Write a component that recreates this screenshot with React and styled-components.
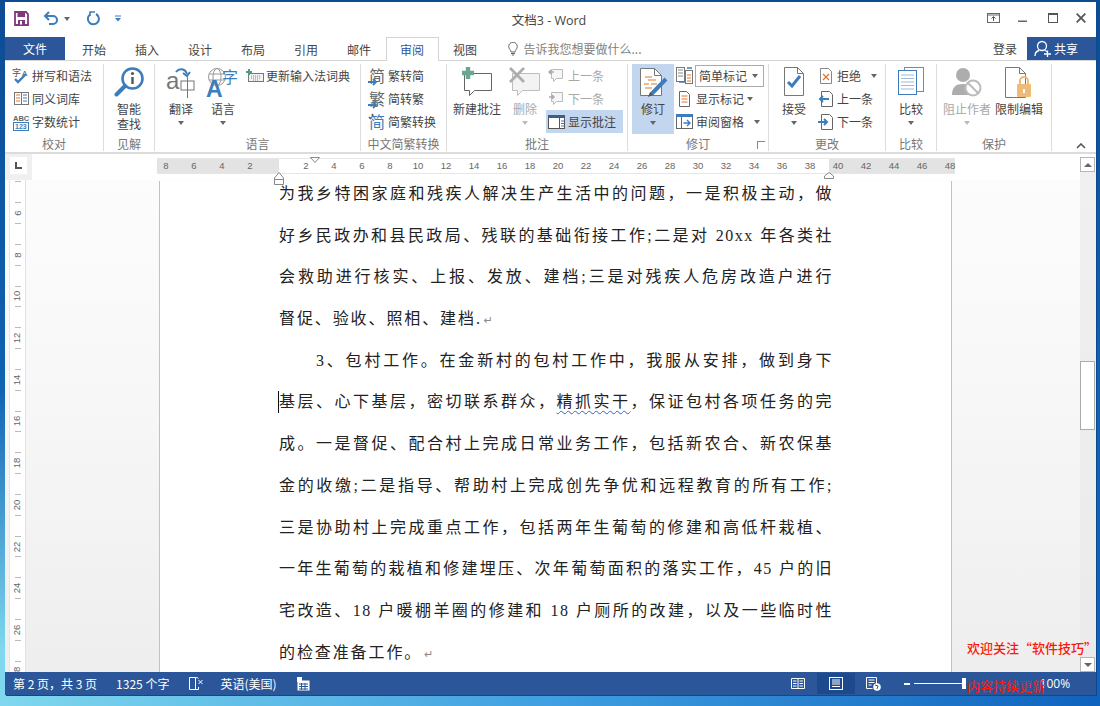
import React from "react";
import styled, { createGlobalStyle } from "styled-components";

const sans = `"Noto Sans CJK SC", sans-serif`;
const BLUE = "#2b579a";
const ICON = "#3f7cbb";
const ORANGE = "#e2762c";

const Global = createGlobalStyle`
    html, body {
        margin: 0;
        height: 706px;
        overflow: hidden;
        background:
            linear-gradient(180deg, #0c4c93 0%, #0f62b4 55%, rgba(20, 120, 210, 0) 92%),
            linear-gradient(90deg, #7fd8ee 0%, #3f9fe0 50%, #0f62bd 100%);
    }
`;

const Ico = styled.svg`
    display: block;
    flex: none;
`;

const Window = styled.div`
    width: 1091px;
    height: 693px;
    margin: 2px 0 0 5px;
    background: #fff;
    display: flex;
    flex-direction: column;
    position: relative;
    font-family: ${sans};
    font-size: 12px;
    color: #444;
    box-shadow: 1px 1px 0 #0d4a8c;
`;

const TitleBar = styled.div`
    height: 35px;
    flex: none;
    display: grid;
    grid-template-columns: 1fr auto 1fr;
    align-items: center;
`;

const Quick = styled.div`
    display: flex;
    align-items: center;
    padding: 0 0 3px 9px;
`;

const Title = styled.div`
    font-family: "Open Sans", ${sans};
    font-size: 12.5px;
    color: #444;
    margin: 0 0 1px -3px;
`;

const Controls = styled.div`
    display: flex;
    justify-content: flex-end;
    align-items: center;
    gap: 18px;
    padding: 0 10px 3px 0;
`;

const TabRow = styled.div`
    height: 23px;
    flex: none;
    display: flex;
    border-bottom: 1px solid #d4d4d4;
`;

const FileTab = styled.div`
    width: 60px;
    margin-right: 2.5px;
    background: ${BLUE};
    color: #fff;
    display: flex;
    align-items: center;
    justify-content: center;
`;

const Tab = styled.div`
    width: 53px;
    box-sizing: border-box;
    height: ${p => (p.$active ? "24px" : "23px")};
    display: flex;
    align-items: center;
    justify-content: center;
    background: #fff;
    color: ${p => (p.$active ? BLUE : "#444")};
    border: 1px solid ${p => (p.$active ? "#d4d4d4" : "transparent")};
    border-bottom: 0;
`;

const TellMe = styled.div`
    display: flex;
    align-items: center;
    gap: 6px;
    margin-left: 16px;
    color: #82827a;
`;

const Login = styled.div`
    margin-left: auto;
    align-self: center;
    margin-right: 10px;
`;

const Share = styled.div`
    width: 69px;
    height: 23px;
    background: ${BLUE};
    color: #fff;
    display: flex;
    align-items: center;
    padding-left: 7px;
    box-sizing: border-box;
    gap: 2px;
`;

const Ribbon = styled.div`
    height: 93px;
    flex: none;
    box-sizing: border-box;
    padding-top: 3px;
    display: flex;
    border-bottom: 2px solid #dcdcdc;
    position: relative;
`;

const Group = styled.section`
    width: ${p => p.$w}px;
    height: 87px;
    box-sizing: border-box;
    flex: none;
    border-right: 1px solid #dedede;
    display: flex;
    flex-direction: column;
    position: relative;
`;

const GroupBody = styled.div`
    height: 70px;
    display: flex;
    padding-left: ${p => p.$pad || 0}px;
`;

const Caption = styled.div`
    margin-top: 2px;
    text-align: center;
    line-height: 15px;
    color: #777;
`;

const Launcher = styled.div`
    position: absolute;
    right: 3px;
    bottom: 2px;
    width: 7px;
    height: 7px;
    border: solid #888;
    border-width: 1px 0 0 1px;
`;

const Collapse = styled.div`
    position: absolute;
    right: 10px;
    bottom: 3px;
`;

const Stack = styled.div`
    display: flex;
    flex-direction: column;
`;

const Small = styled.div`
    height: 23px;
    display: flex;
    align-items: center;
    gap: 2px;
    padding-left: 2px;
    white-space: nowrap;
    width: ${p => (p.$w ? `${p.$w}px` : "auto")};
    box-sizing: border-box;
    background: ${p => (p.$on ? "#c3d6ef" : "transparent")};
    color: ${p => (p.$off ? "#a8a8a8" : "#444")};
`;

const Combo = styled.div`
    width: 69px;
    height: 22px;
    box-sizing: border-box;
    border: 1px solid #ababab;
    margin-left: -1px;
    padding: 0 5px 0 3px;
    display: flex;
    align-items: center;
    justify-content: space-between;
`;

const Large = styled.div`
    width: ${p => p.$w}px;
    height: 70px;
    flex: none;
    display: flex;
    flex-direction: column;
    align-items: center;
    text-align: center;
    line-height: 15px;
    background: ${p => (p.$on ? "#c3d6ef" : "transparent")};
    color: ${p => (p.$off ? "#a8a8a8" : "#444")};
`;

const LargeIcon = styled.div`
    height: 37px;
    padding-top: 3px;
    box-sizing: border-box;
`;

const Caret = styled.span`
    display: inline-block;
    flex: none;
    width: 0;
    height: 0;
    border: 3.5px solid transparent;
    border-top: 4px solid ${p => (p.$off ? "#bbb" : "#666")};
    border-bottom: 0;
    margin: ${p => p.$m || "5px 0 0"};
`;

const Work = styled.div`
    flex: 1;
    min-height: 0;
    display: flex;
`;

const Main = styled.div`
    flex: 1;
    min-width: 0;
    display: flex;
    flex-direction: column;
`;

const RulerRow = styled.div`
    height: 26px;
    flex: none;
    display: flex;
    position: relative;
`;

const Corner = styled.div`
    width: 27px;
    flex: none;
    background: #f0f0f0;
    display: flex;
    padding: 3px 0 0 5px;
    box-sizing: border-box;
`;

const CornerBox = styled.div`
    width: 17px;
    height: 17px;
    background: #fff;
    display: flex;
    align-items: center;
    justify-content: center;
`;

const HRuler = styled.div`
    margin: 5px 0 0 125px;
    width: 798px;
    height: 14px;
    background: linear-gradient(90deg, #e3e3e3 122px, #fff 122px, #fff 672px, #e3e3e3 672px);
    box-shadow: 0 -1px 0 #e6e6e6, 0 1px 0 #e6e6e6;
    display: flex;
    position: relative;
`;

const HLabels = styled.div`
    display: flex;
    margin-left: -5px;
`;

const HNum = styled.span`
    width: 28px;
    flex: none;
    text-align: center;
    font-family: "Liberation Sans", sans-serif;
    font-size: 9.5px;
    line-height: 14px;
    color: #666;
`;

const Marker = styled.div`
    position: absolute;
    left: ${p => p.$x}px;
    top: ${p => p.$y}px;
`;

const DocRow = styled.div`
    flex: 1;
    min-height: 0;
    display: flex;
    overflow: hidden;
    background: linear-gradient(180deg, #fcfcfc 0%, #f7f7f7 45%, #eeeeee 100%);
`;

const VRuler = styled.div`
    width: 15px;
    flex: none;
    margin-left: 5px;
    background: #fff;
    box-shadow: -1px 0 0 #e6e6e6, 1px 0 0 #e2e2e2;
    display: flex;
    flex-direction: column;
    align-items: center;
    padding-top: 0;
    overflow: hidden;
`;

const VCell = styled.div`
    height: 41.7px;
    flex: none;
    width: 100%;
    display: flex;
    flex-direction: column;
    align-items: center;
    justify-content: space-between;
    padding: 10px 0;
    box-sizing: border-box;
    &:first-child {
        margin-top: -29.5px;
    }
    &::before, &::after {
        content: "";
        width: 6px;
        height: 1px;
        background: #bbb;
    }
    span {
        transform: rotate(-90deg);
        font-family: "Liberation Sans", sans-serif;
        font-size: 9.5px;
        line-height: 10px;
        color: #666;
        white-space: nowrap;
    }
`;

const Page = styled.div`
    width: 793px;
    box-sizing: border-box;
    margin-left: 134px;
    flex: none;
    background: #fff;
    border: solid #c2c2c2;
    border-width: 0 1.5px;
    padding: 0 118px 0 119px;
    overflow: hidden;
    margin-top: 1px;
`;

const DocText = styled.div`
    margin-top: -8px;
    font-family: "Liberation Serif", "Noto Sans CJK SC", serif;
    font-size: 16px;
    letter-spacing: 1.5px;
    color: #222;
`;

const Line = styled.div`
    height: 41.7px;
    line-height: 41.7px;
    position: relative;
    text-align: justify;
    text-align-last: ${p => (p.$end ? "left" : "justify")};
    text-justify: inter-character;
    padding-left: ${p => (p.$indent ? 37 : 0)}px;
    letter-spacing: ${p => (p.$end ? "1.9px" : "inherit")};
`;

const Mark = styled.span`
    color: #888;
    font-size: 11px;
    font-family: "DejaVu Sans", sans-serif;
    margin-left: 2px;
`;

const Squiggle = styled.span`
    text-decoration: underline wavy #3a5fc8 1px;
    text-underline-offset: 3px;
`;

const Cursor = styled.i`
    position: absolute;
    left: -1px;
    top: 10px;
    width: 1px;
    height: 22px;
    background: #111;
`;

const Scroll = styled.div`
    width: 16px;
    flex: none;
    display: flex;
    flex-direction: column;
    padding-top: 3px;
    box-sizing: border-box;
    background: linear-gradient(180deg, #fff 18px, #f0f0f0 18px, #eaeaea 100%);
`;

const ScrollBtn = styled.div`
    width: 15px;
    height: 15px;
    box-sizing: border-box;
    flex: none;
    background: #fff;
    border: 1px solid #b5b5b5;
    display: flex;
    align-items: center;
    justify-content: center;
`;

const Thumb = styled.div`
    width: 15px;
    height: 69px;
    box-sizing: border-box;
    flex: none;
    background: #fff;
    border: 1px solid #ababab;
    margin: 189px 0 auto;
`;

const ArrowUp = styled.span`
    width: 0;
    height: 0;
    border: 4px solid transparent;
    border-bottom: 4px solid #666;
    border-top: 0;
`;

const ArrowDown = styled(ArrowUp)`
    border-top: 4px solid #666;
    border-bottom: 0;
`;

const Status = styled.footer`
    height: 23px;
    flex: none;
    background: ${BLUE};
    color: #fff;
    display: flex;
    align-items: center;
    padding-left: 8px;
    white-space: nowrap;
`;

const StatusItem = styled.span`
    margin-right: ${p => p.$mr}px;
    display: flex;
    align-items: center;
`;

const ViewBtn = styled.div`
    width: 38px;
    height: 21px;
    display: flex;
    align-items: center;
    justify-content: center;
    background: ${p => (p.$on ? "#1c4a8c" : "transparent")};
    margin-right: ${p => p.$mr || 0}px;
`;

const Zoom = styled.div`
    display: flex;
    align-items: center;
    margin-left: 11px;
`;

const Minus = styled.i`
    width: 6px;
    height: 2px;
    background: #fff;
    margin-right: 4px;
`;

const Track = styled.div`
    width: 50px;
    height: 1px;
    background: #fff;
    position: relative;
`;

const Knob = styled.i`
    position: absolute;
    right: -2px;
    top: -5px;
    width: 4px;
    height: 11px;
    background: #fff;
`;

const Percent = styled.span`
    font-family: "Open Sans", sans-serif;
    margin-left: 76px;
`;

const Red = styled.div`
    position: absolute;
    left: ${p => p.$x}px;
    top: ${p => p.$y}px;
    color: #fb1a08;
    font-size: 13px;
    line-height: 16px;
    font-weight: 500;
    white-space: nowrap;
`;

// icons of the quick access bar and the window buttons
const SaveIcon = () => (
    <Ico width="15" height="15" viewBox="0 0 15 15">
        <path d="M1 1h11l2 2v11H1z" fill="#fff" stroke="#80397b" strokeWidth="1.8" />
        <rect x="3.5" y="1" width="7.5" height="5" fill="#80397b" />
        <rect x="4" y="9" width="7" height="5" fill="#80397b" />
        <rect x="6" y="10" width="2" height="3.5" fill="#fff" />
    </Ico>
);

const UndoIcon = () => (
    <Ico width="16" height="15" viewBox="0 0 16 15" style={{ marginLeft: 14 }}>
        <path d="M3 5h7a4 4 0 0 1 0 8H6" fill="none" stroke={ICON} strokeWidth="2" />
        <path d="M6 1L2 5l4 4" fill="none" stroke={ICON} strokeWidth="2" />
    </Ico>
);

const RedoIcon = () => (
    <Ico width="14" height="15" viewBox="0 0 14 15" style={{ marginLeft: 16 }}>
        <path d="M10 3a5.5 5.5 0 1 1-6 .5" fill="none" stroke={ICON} strokeWidth="2" />
        <path d="M8 0h-5v4" fill="none" stroke={ICON} strokeWidth="1.6" transform="translate(1 1)" />
    </Ico>
);

const CustomizeIcon = () => (
    <Ico width="6" height="7" viewBox="0 0 6 7" style={{ marginLeft: 15 }}>
        <path d="M0 1h6" stroke={ICON} strokeWidth="1" />
        <path d="M0 3h6L3 6.500z" fill={ICON} />
    </Ico>
);

const RibbonModeIcon = () => (
    <Ico width="13" height="10" viewBox="0 0 13 10">
        <rect x=".5" y=".5" width="12" height="9" fill="none" stroke="#666" />
        <path d="M1 2h11" stroke="#666" />
        <path d="M6.500 8V4M4.500 5.500l2-2 2 2" fill="none" stroke="#555" />
    </Ico>
);

const MinIcon = () => (
    <Ico width="9" height="10" viewBox="0 0 9 10" style={{ marginLeft: 0 }}>
        <rect y="7.500" width="9" height="1.500" fill="#666" />
    </Ico>
);

const MaxIcon = () => (
    <Ico width="10" height="10" viewBox="0 0 10 10" style={{ marginLeft: 3 }}>
        <rect x=".5" y=".5" width="9" height="9" fill="none" stroke="#555" />
        <rect x="0" y="0" width="10" height="2" fill="#555" />
    </Ico>
);

const CloseIcon = () => (
    <Ico width="10" height="10" viewBox="0 0 10 10">
        <path d="M.7.7l8.600 8.600M9.300.7L.7 9.300" stroke="#555" strokeWidth="1.800" />
    </Ico>
);

const BulbIcon = () => (
    <Ico width="10" height="14" viewBox="0 0 10 14">
        <path d="M3 10C3 8 .7 7 .7 4.500a4.300 4.300 0 0 1 8.600 0C9.300 7 7 8 7 10z" fill="none" stroke="#666" />
        <path d="M3 11.500h4M3.800 13h2.400" stroke="#666" />
    </Ico>
);

const PersonIcon = () => (
    <Ico width="18" height="17" viewBox="0 0 18 17">
        <circle cx="8" cy="6" r="4.500" fill="none" stroke="#fff" strokeWidth="1.300" />
        <path d="M1 16c0-3 2-5 4-5.500M11 10.500c1 .3 1.500.7 2 1.200" fill="none" stroke="#fff" strokeWidth="1.300" />
        <path d="M10 14h7M13.500 10.500v7" stroke="#fff" strokeWidth="1.300" />
    </Ico>
);

// ribbon icons
const SpellIcon = () => (
    <Ico width="18" height="18" viewBox="0 0 18 18">
        <text x="0" y="9" fontSize="9" fill="#555" fontFamily={sans}>字</text>
        <text x="10" y="9" fontSize="8" fill="#555" fontFamily="Liberation Sans">A</text>
        <path d="M3 12l3 3 8-8" fill="none" stroke={ICON} strokeWidth="2.400" />
    </Ico>
);

const BookIcon = () => (
    <Ico width="18" height="15" viewBox="0 0 18 15">
        <rect x="2.500" y="1.500" width="14" height="12" fill="#fff" stroke="#777" />
        <path d="M9.500 1.500v12" stroke="#777" />
        <path d="M4 4h4M4 7h4M4 10h4" stroke={ORANGE} />
        <path d="M11 4h4M11 7h4M11 10h4" stroke={ICON} />
    </Ico>
);

const AbcIcon = () => (
    <Ico width="18" height="18" viewBox="0 0 18 18">
        <text x="1" y="7.500" fontSize="7.500" fontWeight="700" fill="#666" fontFamily="Liberation Sans">ABC</text>
        <rect x="1.500" y="9.500" width="15" height="8" fill="#fff" stroke={ICON} />
        <text x="3" y="16" fontSize="7" fontWeight="700" fill={ICON} fontFamily="Liberation Sans">123</text>
    </Ico>
);

const SearchIcon = () => (
    <Ico width="30" height="32" viewBox="0 0 30 32">
        <circle cx="18.500" cy="11.500" r="10" fill="#fff" stroke={ICON} strokeWidth="2.600" />
        <path d="M11 19L2.500 27.500" stroke={ICON} strokeWidth="4" strokeLinecap="round" />
        <circle cx="18.500" cy="6.500" r="1.600" fill="#555" />
        <path d="M18.500 10v7" stroke="#555" strokeWidth="2.400" />
    </Ico>
);

const TranslateIcon = () => (
    <Ico width="32" height="32" viewBox="0 0 32 32">
        <text x="1" y="22" fontSize="24" fill="#777" fontFamily="Liberation Sans">a</text>
        <path d="M11 5c3-4 9-4 11 2" fill="none" stroke={ICON} strokeWidth="2" />
        <path d="M18 6l4 3 3-4" fill="none" stroke={ICON} strokeWidth="2" />
        <rect x="16" y="14" width="13" height="9" fill="none" stroke="#777" />
        <path d="M22.500 10v21" stroke="#777" />
    </Ico>
);

const LanguageIcon = () => (
    <Ico width="34" height="32" viewBox="0 0 34 32">
        <circle cx="11" cy="10" r="8.500" fill="none" stroke="#999" />
        <ellipse cx="11" cy="10" rx="4" ry="8.500" fill="none" stroke="#999" />
        <path d="M3 7h16M3 13h16" stroke="#999" />
        <text x="0" y="30" fontSize="23" fontWeight="700" fill={ICON} fontFamily="Liberation Sans">A</text>
        <text x="16" y="16" fontSize="16" fill={ICON} fontFamily={sans}>字</text>
    </Ico>
);

const KeyboardIcon = () => (
    <Ico width="18" height="14" viewBox="0 0 18 14">
        <rect x="2.500" y="4.500" width="15" height="8" fill="#f2f2f2" stroke="#777" />
        <path d="M5 7h10M5 9h10M7 11h6" stroke="#888" strokeDasharray="1 1" />
        <path d="M0 3h6M3 0v6" stroke="#4f9d78" strokeWidth="2" />
    </Ico>
);

const ConvertIcon = ({ ch, blue }) => (
    <Ico width="18" height="20" viewBox="0 0 18 20">
        <text x="1" y="16" fontSize="16" fill={blue ? ICON : "#666"} fontFamily={sans}>{ch}</text>
        {!blue && <path d="M0 16h8M5 13l3 3-3 3" fill="none" stroke={ICON} strokeWidth="1.800" />}
        {blue && <path d="M1 5l2 2M4 2l1 2" stroke="#555" strokeWidth="1.500" />}
    </Ico>
);

const CommentIcon = () => (
    <Ico width="32" height="30" viewBox="0 0 32 30">
        <path d="M3.500 6.500h27v17h-17l-5 5v-5h-5z" fill="#fff" stroke="#666" />
        <path d="M7 0v12M1 6h12" stroke="#69a890" strokeWidth="4.400" />
    </Ico>
);

const DeleteIcon = () => (
    <Ico width="32" height="30" viewBox="0 0 32 30">
        <path d="M3.500 6.500h27v17h-17l-5 5v-5h-5z" fill="#f3f3f3" stroke="#bdbdbd" />
        <path d="M1 1l14 14M15 1L1 15" stroke="#adadad" strokeWidth="2.800" />
    </Ico>
);

const BubbleIcon = ({ down }) => (
    <Ico width="18" height="17" viewBox="0 0 18 17">
        <path d="M3.500 2.500h11v9h-6l-3 3v-3h-2z" fill="#f6f6f6" stroke="#bbb" />
        <path d={down ? "M1 7h5M4 5l2 2-2 2" : "M1 5h5M3 3L1 5l2 2"} fill="none" stroke="#aaa" strokeWidth="1.400" />
    </Ico>
);

const ShowCommentsIcon = () => (
    <Ico width="18" height="14" viewBox="0 0 18 14">
        <rect x=".5" y=".5" width="16" height="13" fill="#fff" stroke="#555" />
        <rect x="0" y="0" width="17" height="3" fill="#3a5f8f" />
        <path d="M11.500 3v10" stroke="#555" />
        <path d="M13 6h3M13 8.500h3M13 11h3" stroke={ICON} />
    </Ico>
);

const TrackIcon = () => (
    <Ico width="32" height="32" viewBox="0 0 32 32">
        <path d="M3.500 1.500h14l7 7v20h-21z" fill="#fff" stroke="#777" />
        <path d="M17.500 1.500v7h7" fill="none" stroke="#777" />
        <path d="M8 10h7M11 13h8M7 17h5M14 17h6M8 21h7" stroke={ORANGE} strokeWidth="1.200" />
        <path d="M29 12L14.500 27" stroke={ICON} strokeWidth="4" />
        <path d="M13 25l-2 5 5-2z" fill="#555" />
    </Ico>
);

const CompareSmallIcon = () => (
    <Ico width="18" height="18" viewBox="0 0 18 18">
        <rect x=".5" y=".5" width="8" height="14" fill="#fff" stroke="#777" />
        <rect x="9.500" y="3.500" width="7" height="13" fill="#fff" stroke="#777" />
        <path d="M2 3h5M2 6h5M2 9h5" stroke="#888" />
        <path d="M11 8h4M11 11h4M11 14h4" stroke={ORANGE} />
        <path d="M11 1h5M9 15H3" stroke={ICON} strokeWidth="1.600" />
    </Ico>
);

const DocLinesIcon = () => (
    <Ico width="18" height="16" viewBox="0 0 18 16">
        <path d="M3.500.5h7l3 3v12h-10z" fill="#fff" stroke="#666" />
        <path d="M5.500 5h6M5.500 8h6M5.500 11h6" stroke={ORANGE} />
    </Ico>
);

const PaneIcon = () => (
    <Ico width="18" height="15" viewBox="0 0 18 15">
        <rect x=".5" y=".5" width="16" height="14" fill="#fff" stroke="#666" />
        <rect width="17" height="3" fill={ICON} />
        <path d="M5.500 3v12" stroke="#666" />
        <path d="M7.500 9h6M11 6l3 3-3 3" fill="none" stroke={ICON} strokeWidth="1.400" />
    </Ico>
);

const AcceptIcon = () => (
    <Ico width="24" height="30" viewBox="0 0 24 30">
        <path d="M2.500.5h13l6 6v22h-19z" fill="#fff" stroke="#777" />
        <path d="M15.500.5v6h6" fill="none" stroke="#777" />
        <path d="M6 15l4 4 8-10" fill="none" stroke={ICON} strokeWidth="3" />
    </Ico>
);

const RejectIcon = () => (
    <Ico width="18" height="16" viewBox="0 0 18 16">
        <path d="M3.500.5h8l3 3v12h-11z" fill="#fff" stroke="#888" />
        <path d="M6 6l6 6M12 6l-6 6" stroke={ORANGE} strokeWidth="1.300" />
    </Ico>
);

const ChangeIcon = ({ next }) => (
    <Ico width="18" height="16" viewBox="0 0 18 16">
        <path d="M4.500.5h8l3 3v12h-11z" fill="#fff" stroke="#666" />
        <path d={next ? "M1 8h9M7 5l3 3-3 3" : "M12 8H3M6 5L3 8l3 3"} fill="none" stroke={ICON} strokeWidth="2" />
    </Ico>
);

const CompareIcon = () => (
    <Ico width="26" height="28" viewBox="0 0 26 28">
        <rect x="6.500" y=".5" width="19" height="24" fill="#fff" stroke="#888" />
        <rect x=".5" y="3.500" width="18" height="24" fill="#fff" stroke={ICON} />
        <path d="M3 8h13M3 11.500h13M3 15h13M3 18.500h13M3 22h13" stroke="#9db8d8" />
    </Ico>
);

const BlockIcon = () => (
    <Ico width="32" height="32" viewBox="0 0 32 32">
        <circle cx="12" cy="8" r="7" fill="#adadad" />
        <path d="M1 28c0-8 4-11 11-11s11 3 11 11z" fill="#adadad" />
        <circle cx="22" cy="21" r="7.500" fill="#fff" stroke="#bbb" strokeWidth="2" />
        <path d="M17 16l10 10" stroke="#bbb" strokeWidth="2" />
    </Ico>
);

const LockDocIcon = () => (
    <Ico width="30" height="32" viewBox="0 0 30 32">
        <path d="M1.500.5h14l6 6v24h-20z" fill="#fff" stroke="#777" />
        <path d="M15.500.500v6h6" fill="none" stroke="#777" />
        <rect x="13" y="17" width="14" height="13" rx="1" fill="#eebb78" />
        <path d="M16 17v-3a4 4 0 0 1 8 0v3" fill="none" stroke="#eebb78" strokeWidth="2" />
        <path d="M20 22v4" stroke="#fff" strokeWidth="2" />
    </Ico>
);

const CollapseIcon = () => (
    <Ico width="10" height="6" viewBox="0 0 10 6">
        <path d="M1 5l4-4 4 4" fill="none" stroke="#555" strokeWidth="1.600" />
    </Ico>
);

const CornerIcon = () => (
    <Ico width="7" height="7" viewBox="0 0 7 7">
        <path d="M1 0v6h6" fill="none" stroke="#555" strokeWidth="2" />
    </Ico>
);

const IndentTop = () => (
    <Ico width="10" height="6" viewBox="0 0 10 6">
        <path d="M.5.5h9L5 5.500z" fill="#fff" stroke="#888" />
    </Ico>
);

const IndentBottom = () => (
    <Ico width="10" height="13" viewBox="0 0 10 13">
        <path d="M.5 6L5 .5 9.500 6v6.500h-9zM.5 7.500h9" fill="#fff" stroke="#888" />
    </Ico>
);

const IndentRight = () => (
    <Ico width="10" height="7" viewBox="0 0 10 7">
        <path d="M.5 6.500V4L5 .5 9.500 4v2.500z" fill="#fff" stroke="#888" />
    </Ico>
);

// status bar icons
const ProofIcon = () => (
    <Ico width="15" height="16" viewBox="0 0 15 16">
        <path d="M.5 1.500h6v12h-6zM6.500 1.500v12M6.500 1.500c1 0 2 0 3 1M9.500 11v2.500h-3" fill="none" stroke="#fff" />
        <path d="M9.500 4l4 4M13.500 4l-4 4" stroke="#fff" />
    </Ico>
);

const MacroIcon = () => (
    <Ico width="13" height="14" viewBox="0 0 13 14">
        <rect x=".5" y="3.500" width="12" height="10" fill="#fff" />
        <rect x="0" y="0" width="5" height="5" fill="#fff" />
        <path d="M2 7h9M2 9.500h9M2 12h9M4.500 6v7M8 6v7" stroke={BLUE} />
    </Ico>
);

const ReadIcon = () => (
    <Ico width="14" height="13" viewBox="0 0 14 13">
        <path d="M.5 1.500h13v10H.5zM7 1.500v10" fill="none" stroke="#fff" />
        <path d="M2 4h3.500M2 6.500h3.500M2 9h3.500M8.500 4H12M8.500 6.500H12M8.500 9H12" stroke="#fff" />
    </Ico>
);

const PrintIcon = () => (
    <Ico width="14" height="13" viewBox="0 0 14 13">
        <rect x=".5" y=".5" width="13" height="12" fill="none" stroke="#fff" />
        <path d="M3 3h8M3 5h8M3 7h8M3 9.500h8" stroke="#fff" />
    </Ico>
);

const WebIcon = () => (
    <Ico width="15" height="14" viewBox="0 0 15 14">
        <path d="M.5.5h10v8M.5.5v11h6" fill="none" stroke="#fff" />
        <path d="M2.500 3h6M2.500 5.500h6M2.500 8h3" stroke="#fff" />
        <circle cx="11" cy="10" r="3.800" fill="#fff" />
        <path d="M9 8l3 1-1 3" fill="none" stroke={BLUE} />
    </Ico>
);

const hNums = [8, 6, 4, 2, "", 2, 4, 6, 8, 10, 12, 14, 16, 18, 20, 22, 24, 26, 28, 30, 32, 34, 36, 38, 40, 42, 44, 46, 48];
const vNums = [4, 6, 8, 10, 12, 14, 16, 18, 20, 22, 24, 26, 28];

function SmallBtn({ icon, children, ...rest }) {
    return <Small {...rest}>{icon}{children}</Small>;
}

function LargeBtn({ icon, w, caret, off, on, children }) {
    return (
        <Large $w={w} $off={off} $on={on}>
            <LargeIcon>{icon}</LargeIcon>
            <div>{children}</div>
            {caret && <Caret $off={off} />}
        </Large>
    );
}

export default function App() {
    return (
        <>
            <Global />
            <Window>
                <TitleBar>
                    <Quick>
                        <SaveIcon />
                        <UndoIcon />
                        <Caret $m="1px 0 0 5px" />
                        <RedoIcon />
                        <CustomizeIcon />
                    </Quick>
                    <Title>文档3 - Word</Title>
                    <Controls>
                        <RibbonModeIcon />
                        <MinIcon />
                        <MaxIcon />
                        <CloseIcon />
                    </Controls>
                </TitleBar>

                <TabRow>
                    <FileTab>文件</FileTab>
                    <Tab>开始</Tab>
                    <Tab>插入</Tab>
                    <Tab>设计</Tab>
                    <Tab>布局</Tab>
                    <Tab>引用</Tab>
                    <Tab>邮件</Tab>
                    <Tab $active>审阅</Tab>
                    <Tab>视图</Tab>
                    <TellMe><BulbIcon />告诉我您想要做什么...</TellMe>
                    <Login>登录</Login>
                    <Share><PersonIcon />共享</Share>
                </TabRow>

                <Ribbon>
                    <Group $w={99}>
                        <GroupBody $pad={5}>
                            <Stack>
                                <SmallBtn icon={<SpellIcon />}>拼写和语法</SmallBtn>
                                <SmallBtn icon={<BookIcon />}>同义词库</SmallBtn>
                                <SmallBtn icon={<AbcIcon />}>字数统计</SmallBtn>
                            </Stack>
                        </GroupBody>
                        <Caption>校对</Caption>
                    </Group>
                    <Group $w={51}>
                        <GroupBody>
                            <LargeBtn w={50} icon={<SearchIcon />}>智能<br />查找</LargeBtn>
                        </GroupBody>
                        <Caption>见解</Caption>
                    </Group>
                    <Group $w={206}>
                        <GroupBody $pad={5}>
                            <LargeBtn w={42} caret icon={<TranslateIcon />}>翻译</LargeBtn>
                            <LargeBtn w={42} caret icon={<LanguageIcon />}>语言</LargeBtn>
                            <Stack>
                                <SmallBtn icon={<KeyboardIcon />}>更新输入法词典</SmallBtn>
                            </Stack>
                        </GroupBody>
                        <Caption>语言</Caption>
                    </Group>
                    <Group $w={86}>
                        <GroupBody $pad={5}>
                            <Stack>
                                <SmallBtn icon={<ConvertIcon ch="简" />}>繁转简</SmallBtn>
                                <SmallBtn icon={<ConvertIcon ch="繁" />}>简转繁</SmallBtn>
                                <SmallBtn icon={<ConvertIcon ch="简" blue />}>简繁转换</SmallBtn>
                            </Stack>
                        </GroupBody>
                        <Caption>中文简繁转换</Caption>
                    </Group>
                    <Group $w={181}>
                        <GroupBody $pad={3}>
                            <LargeBtn w={54} icon={<CommentIcon />}>新建批注</LargeBtn>
                            <LargeBtn w={42} caret off icon={<DeleteIcon />}>删除</LargeBtn>
                            <Stack>
                                <SmallBtn $off icon={<BubbleIcon />}>上一条</SmallBtn>
                                <SmallBtn $off icon={<BubbleIcon down />}>下一条</SmallBtn>
                                <SmallBtn $on $w={77} icon={<ShowCommentsIcon />}>显示批注</SmallBtn>
                            </Stack>
                        </GroupBody>
                        <Caption>批注</Caption>
                    </Group>
                    <Group $w={141}>
                        <GroupBody $pad={4}>
                            <LargeBtn w={42} on caret icon={<TrackIcon />}>修订</LargeBtn>
                            <Stack>
                                <SmallBtn icon={<CompareSmallIcon />}>
                                    <Combo>简单标记<Caret $m="0" /></Combo>
                                </SmallBtn>
                                <SmallBtn icon={<DocLinesIcon />}>显示标记<Caret $m="0 0 0 1px" /></SmallBtn>
                                <SmallBtn icon={<PaneIcon />}>审阅窗格<Caret $m="0 0 0 8px" /></SmallBtn>
                            </Stack>
                        </GroupBody>
                        <Caption>修订</Caption>
                        <Launcher />
                    </Group>
                    <Group $w={117}>
                        <GroupBody $pad={4}>
                            <LargeBtn w={42} caret icon={<AcceptIcon />}>接受</LargeBtn>
                            <Stack>
                                <SmallBtn icon={<RejectIcon />}>拒绝<Caret $m="0 0 0 8px" /></SmallBtn>
                                <SmallBtn icon={<ChangeIcon />}>上一条</SmallBtn>
                                <SmallBtn icon={<ChangeIcon next />}>下一条</SmallBtn>
                            </Stack>
                        </GroupBody>
                        <Caption>更改</Caption>
                    </Group>
                    <Group $w={51}>
                        <GroupBody>
                            <LargeBtn w={50} caret icon={<CompareIcon />}>比较</LargeBtn>
                        </GroupBody>
                        <Caption>比较</Caption>
                    </Group>
                    <Group $w={115}>
                        <GroupBody $pad={4}>
                            <LargeBtn w={52} caret off icon={<BlockIcon />}>阻止作者</LargeBtn>
                            <LargeBtn w={52} icon={<LockDocIcon />}>限制编辑</LargeBtn>
                        </GroupBody>
                        <Caption>保护</Caption>
                    </Group>
                    <Collapse><CollapseIcon /></Collapse>
                </Ribbon>

                <Work>
                    <Main>
                        <RulerRow>
                            <Corner>
                                <CornerBox><CornerIcon /></CornerBox>
                            </Corner>
                            <HRuler>
                                <HLabels>
                                    {hNums.map((n, i) => <HNum key={i}>{n}</HNum>)}
                                </HLabels>
                                <Marker $x={117} $y={13}><IndentBottom /></Marker>
                                <Marker $x={153} $y={-2}><IndentTop /></Marker>
                                <Marker $x={667} $y={13}><IndentRight /></Marker>
                            </HRuler>
                        </RulerRow>
                        <DocRow>
                            <VRuler>
                                {vNums.map(n => <VCell key={n}><span>{n}</span></VCell>)}
                            </VRuler>
                            <Page>
                                <DocText>
                                    <Line>为我乡特困家庭和残疾人解决生产生活中的问题，一是积极主动，做</Line>
                                    <Line>好乡民政办和县民政局、残联的基础衔接工作;二是对 20xx 年各类社</Line>
                                    <Line>会救助进行核实、上报、发放、建档;三是对残疾人危房改造户进行</Line>
                                    <Line $end>督促、验收、照相、建档.<Mark>↵</Mark></Line>
                                    <Line $indent>3、包村工作。在金新村的包村工作中，我服从安排，做到身下</Line>
                                    <Line><Cursor />基层、心下基层，密切联系群众，<Squiggle>精抓实干</Squiggle>，保证包村各项任务的完</Line>
                                    <Line>成。一是督促、配合村上完成日常业务工作，包括新农合、新农保基</Line>
                                    <Line>金的收缴;二是指导、帮助村上完成创先争优和远程教育的所有工作;</Line>
                                    <Line>三是协助村上完成重点工作，包括两年生葡萄的修建和高低杆栽植、</Line>
                                    <Line>一年生葡萄的栽植和修建埋压、次年葡萄面积的落实工作，45 户的旧</Line>
                                    <Line>宅改造、18 户暖棚羊圈的修建和 18 户厕所的改建，以及一些临时性</Line>
                                    <Line $end>的检查准备工作。<Mark>↵</Mark></Line>
                                </DocText>
                            </Page>
                        </DocRow>
                    </Main>
                    <Scroll>
                        <ScrollBtn><ArrowUp /></ScrollBtn>
                        <Thumb />
                        <ScrollBtn><ArrowDown /></ScrollBtn>
                    </Scroll>
                </Work>

                <Status>
                    <StatusItem $mr={19}>第 2 页，共 3 页</StatusItem>
                    <StatusItem $mr={20}>1325 个字</StatusItem>
                    <StatusItem $mr={16}><ProofIcon /></StatusItem>
                    <StatusItem $mr={20}>英语(美国)</StatusItem>
                    <StatusItem $mr={0}><MacroIcon /></StatusItem>
                    <ViewBtn style={{ marginLeft: 469 }}><ReadIcon /></ViewBtn>
                    <ViewBtn $on><PrintIcon /></ViewBtn>
                    <ViewBtn><WebIcon /></ViewBtn>
                    <Zoom>
                        <Minus />
                        <Track><Knob /></Track>
                        <Percent>100%</Percent>
                    </Zoom>
                </Status>

                <Red $x={962} $y={638}>欢迎关注“软件技巧”</Red>
                <Red $x={962} $y={676}>内容持续更新</Red>
            </Window>
        </>
    );
}
